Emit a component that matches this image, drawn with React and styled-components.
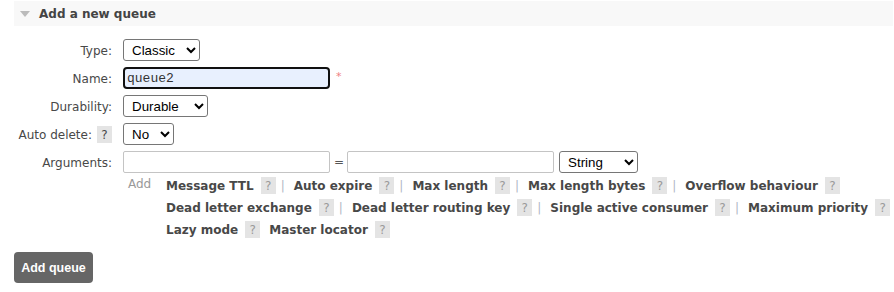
import React from "react";
import styled, { createGlobalStyle } from "styled-components";

const GlobalStyle = createGlobalStyle`
  html, body {
    margin: 0;
    padding: 0;
    background: #fff;
  }
  body {
    font: 12px "DejaVu Sans", Verdana, sans-serif;
    color: #484848;
  }
`;

const Page = styled.div`
  padding: 1px 1px 0 14px;
`;

const SectionHeader = styled.div`
  display: flex;
  align-items: center;
  height: 25px;
  background: #f8f8f8;
  font-weight: bold;
  color: #444;
  padding-left: 6px;
`;

const Triangle = styled.span`
  width: 0;
  height: 0;
  border-left: 5px solid transparent;
  border-right: 5px solid transparent;
  border-top: 6px solid #bbb;
  margin-right: 9px;
  margin-top: 1px;
`;

const Form = styled.div`
  display: grid;
  grid-template-columns: 98px 1fr;
  column-gap: 11px;
  row-gap: 6px;
  margin-top: 13px;
`;

const Label = styled.div`
  display: flex;
  align-items: center;
  justify-content: flex-end;
  height: 22px;
  white-space: nowrap;
  padding-top: 1px;
  box-sizing: border-box;
`;

const Cell = styled.div`
  display: flex;
  align-items: center;
  height: 22px;
`;

const Select = styled.select`
  width: ${(p) => p.$w}px;
  height: 22px;
  font: 13.33px "Liberation Sans", Arial, sans-serif;
  color: #000;
  background: #fff;
  border: 1px solid #767676;
  border-radius: 3px;
  padding: 0 2px 0 4px;
  margin-left: ${(p) => p.$ml ?? 0}px;
  box-sizing: border-box;
`;

const TextInput = styled.input`
  width: ${(p) => p.$w}px;
  height: 22px;
  box-sizing: border-box;
  border: 1px solid #c4c4c4;
  border-radius: 2px;
  padding: 0 3px;
  font: 13px "Liberation Mono", "Courier New", monospace;
  color: #333;
  background: ${(p) => (p.$focused ? "#e8f0fe" : "#fff")};
  ${(p) =>
    p.$focused &&
    `
    border: 2px solid #101010;
    border-radius: 4px;
    padding: 0 2px;
  `}
  outline: none;
`;

const Required = styled.span`
  color: #f08080;
  font-size: 11px;
  margin-left: 6px;
  align-self: flex-start;
  margin-top: 3px;
`;

const Equals = styled.span`
  margin: 0 3px 0 4px;
  color: #555;
`;

const HelpBox = styled.span`
  display: inline-flex;
  align-items: center;
  justify-content: center;
  width: 15px;
  height: 17px;
  background: #e4e4e4;
  color: ${(p) => (p.$dark ? "#484848" : "#9a9a9a")};
  margin-left: ${(p) => p.$ml ?? 7}px;
`;

const Extras = styled.div`
  grid-column: 2;
  display: grid;
  grid-template-columns: 43px auto;
  margin-top: -2px;
`;

const AddText = styled.span`
  color: #999;
  padding-left: 5px;
  line-height: 17px;
  margin-top: -1px;
`;

const Lines = styled.div`
  display: flex;
  flex-direction: column;
  row-gap: 5px;
`;

const LinkLine = styled.div`
  display: flex;
  align-items: center;
  height: 17px;
  white-space: nowrap;
`;

const ArgLink = styled.span`
  font-weight: bold;
  color: #484848;
  margin-left: ${(p) => (p.$first ? 0 : p.$afterSep ? 0 : 9)}px;
`;

const Sep = styled.span`
  color: #b0b8c4;
  margin: 0 9px 0 5px;
`;

const AddButton = styled.button`
  margin-top: 14px;
  width: 79px;
  height: 31px;
  background: #666;
  color: #fff;
  border: none;
  border-radius: 4px;
  font: bold 12.5px "Liberation Sans", Arial, sans-serif;
  padding: 0;
  cursor: pointer;
`;

const lines = [
  ["Message TTL", "Auto expire", "Max length", "Max length bytes", "Overflow behaviour"],
  ["Dead letter exchange", "Dead letter routing key", "Single active consumer", "Maximum priority"],
  ["Lazy mode", "Master locator"],
];

function LinkRow({ items, separated }) {
  return (
    <LinkLine>
      {items.map((name, i) => (
        <React.Fragment key={name}>
          <ArgLink $first={i === 0} $afterSep={separated}>
            {name}
          </ArgLink>
          <HelpBox>?</HelpBox>
          {separated && i < items.length - 1 && <Sep>|</Sep>}
        </React.Fragment>
      ))}
    </LinkLine>
  );
}

export default function App() {
  return (
    <Page>
      <GlobalStyle />
      <SectionHeader>
        <Triangle />
        Add a new queue
      </SectionHeader>
      <Form>
        <Label>Type:</Label>
        <Cell>
          <Select $w={77} defaultValue="classic">
            <option value="classic">Classic</option>
            <option value="quorum">Quorum</option>
          </Select>
        </Cell>

        <Label>Name:</Label>
        <Cell>
          <TextInput $w={207} $focused defaultValue="queue2" />
          <Required>*</Required>
        </Cell>

        <Label>Durability:</Label>
        <Cell>
          <Select $w={85} defaultValue="durable">
            <option value="durable">Durable</option>
            <option value="transient">Transient</option>
          </Select>
        </Cell>

        <Label>
          Auto delete:
          <HelpBox $dark $ml={5}>?</HelpBox>
        </Label>
        <Cell>
          <Select $w={51} defaultValue="no">
            <option value="no">No</option>
            <option value="yes">Yes</option>
          </Select>
        </Cell>

        <Label>Arguments:</Label>
        <Cell>
          <TextInput $w={207} />
          <Equals>=</Equals>
          <TextInput $w={207} />
          <Select $w={79} $ml={5} defaultValue="string">
            <option value="string">String</option>
            <option value="number">Number</option>
            <option value="boolean">Boolean</option>
            <option value="list">List</option>
          </Select>
        </Cell>

        <Extras>
          <AddText>Add</AddText>
          <Lines>
            <LinkRow items={lines[0]} separated />
            <LinkRow items={lines[1]} separated />
            <LinkRow items={lines[2]} />
          </Lines>
        </Extras>
      </Form>
      <AddButton>Add queue</AddButton>
    </Page>
  );
}
